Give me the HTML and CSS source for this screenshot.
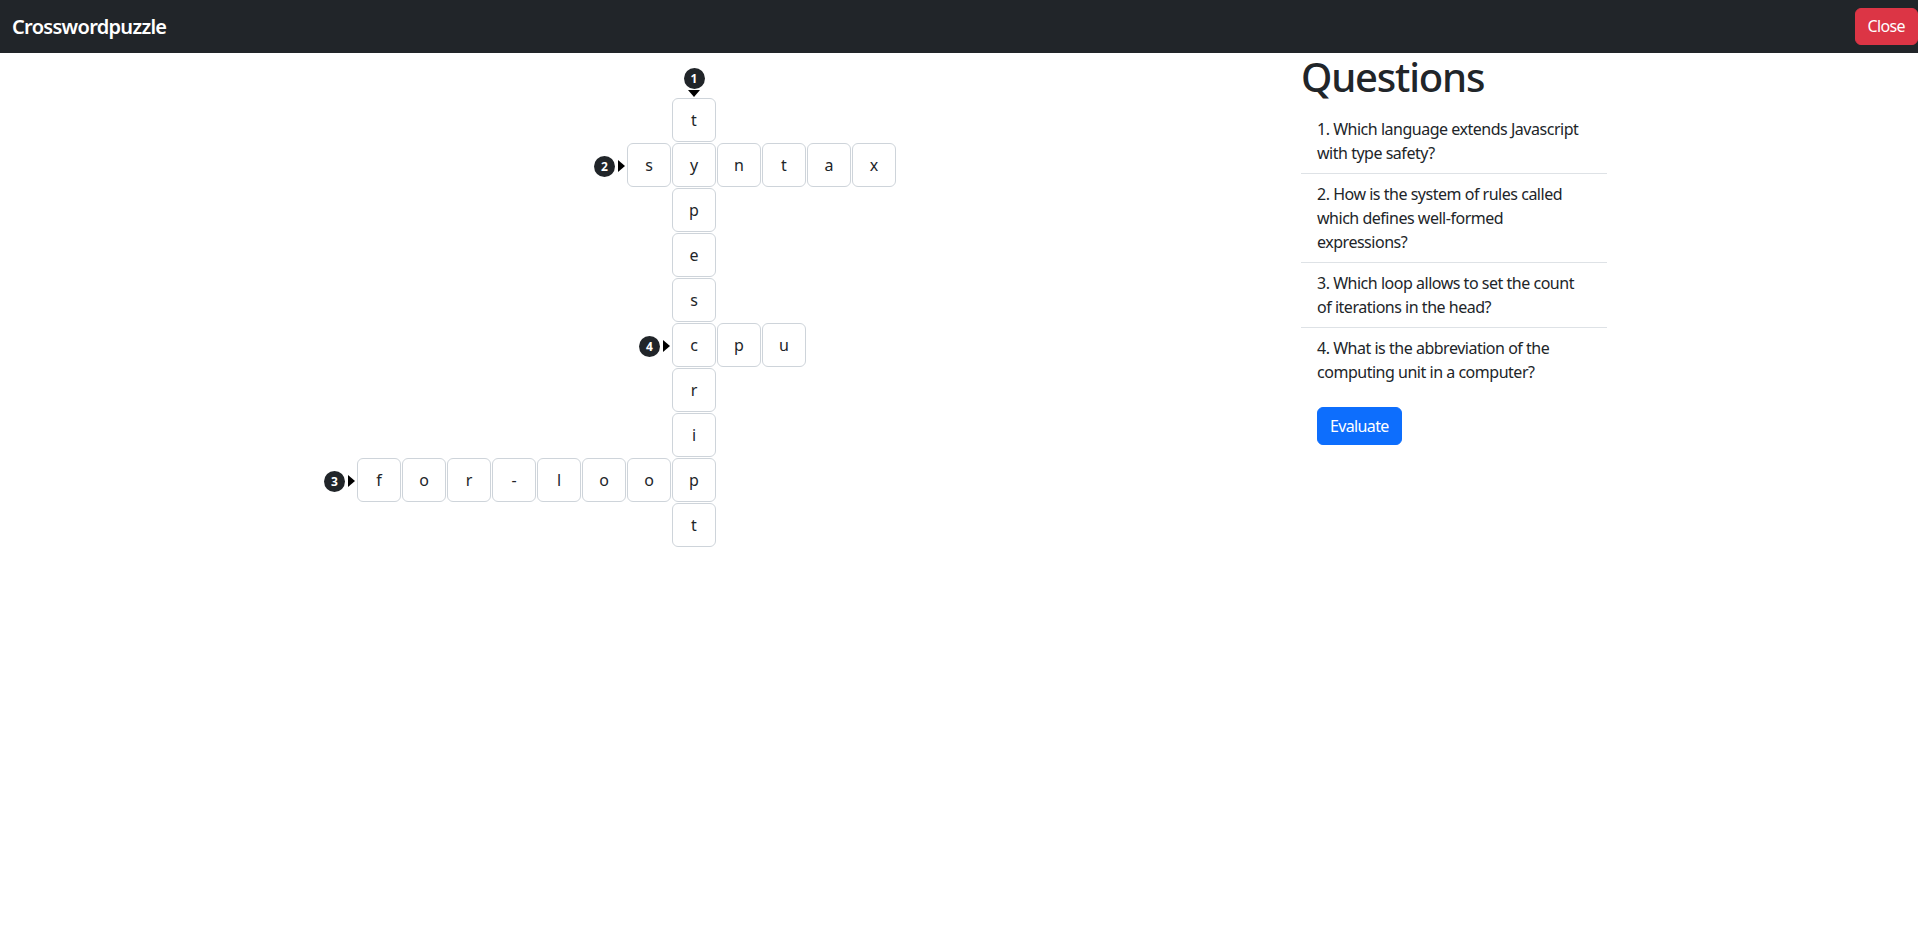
FILE: index.html
```html
<!DOCTYPE html>
<html lang="en">
<head>
<meta charset="utf-8">
<title>Crosswordpuzzle</title>
<link rel="stylesheet" href="styles.css">
</head>
<body>
<nav class="navbar">
  <span class="brand">Crosswordpuzzle</span>
  <button class="btn btn-danger">Close</button>
</nav>
<main class="page">
  <section class="board">
    <div class="grid">
      <div class="clue down" style="grid-column:9;grid-row:1"><span class="num">1</span><span class="tri-down"></span></div>
      <div class="clue across" style="grid-column:7;grid-row:3"><span class="num">2</span><span class="tri-right"></span></div>
      <div class="clue across" style="grid-column:8;grid-row:7"><span class="num">4</span><span class="tri-right"></span></div>
      <div class="clue across" style="grid-column:1;grid-row:10"><span class="num">3</span><span class="tri-right"></span></div>

      <div class="cell" style="grid-column:9;grid-row:2">t</div>
      <div class="cell" style="grid-column:8;grid-row:3">s</div>
      <div class="cell" style="grid-column:9;grid-row:3">y</div>
      <div class="cell" style="grid-column:10;grid-row:3">n</div>
      <div class="cell" style="grid-column:11;grid-row:3">t</div>
      <div class="cell" style="grid-column:12;grid-row:3">a</div>
      <div class="cell" style="grid-column:13;grid-row:3">x</div>
      <div class="cell" style="grid-column:9;grid-row:4">p</div>
      <div class="cell" style="grid-column:9;grid-row:5">e</div>
      <div class="cell" style="grid-column:9;grid-row:6">s</div>
      <div class="cell" style="grid-column:9;grid-row:7">c</div>
      <div class="cell" style="grid-column:10;grid-row:7">p</div>
      <div class="cell" style="grid-column:11;grid-row:7">u</div>
      <div class="cell" style="grid-column:9;grid-row:8">r</div>
      <div class="cell" style="grid-column:9;grid-row:9">i</div>
      <div class="cell" style="grid-column:2;grid-row:10">f</div>
      <div class="cell" style="grid-column:3;grid-row:10">o</div>
      <div class="cell" style="grid-column:4;grid-row:10">r</div>
      <div class="cell" style="grid-column:5;grid-row:10">-</div>
      <div class="cell" style="grid-column:6;grid-row:10">l</div>
      <div class="cell" style="grid-column:7;grid-row:10">o</div>
      <div class="cell" style="grid-column:8;grid-row:10">o</div>
      <div class="cell" style="grid-column:9;grid-row:10">p</div>
      <div class="cell" style="grid-column:9;grid-row:11">t</div>
    </div>
  </section>
  <aside class="questions">
    <h1 class="title">Questions</h1>
    <ol class="list">
      <li class="item">1. Which language extends Javascript with type safety?</li>
      <li class="item">2. How is the system of rules called which defines well-formed expressions?</li>
      <li class="item">3. Which loop allows to set the count of iterations in the head?</li>
      <li class="item">4. What is the abbreviation of the computing unit in a computer?</li>
    </ol>
    <div class="actions">
      <button class="btn btn-primary">Evaluate</button>
    </div>
  </aside>
</main>
</body>
</html>
```
FILE: styles.css
```css
* { box-sizing: border-box; }
html, body { margin: 0; padding: 0; }
body {
  font-family: "Noto Sans", "Open Sans", sans-serif;
  font-size: 16px;
  line-height: 1.5;
  letter-spacing: -0.03em;
  color: #212529;
  background: #fff;
}
.navbar {
  height: 53px;
  background: #212529;
  display: flex;
  align-items: center;
  justify-content: space-between;
  padding-left: 12px;
}
.brand {
  color: #fff;
  font-size: 20px;
  font-weight: 600;
  line-height: 30px;
  letter-spacing: -0.035em;
}
.btn {
  font-family: inherit;
  font-size: 16px;
  line-height: 24px;
  letter-spacing: -0.04em;
  padding: 5px 12px 6px;
  border: 1px solid transparent;
  border-radius: 6px;
  color: #fff;
  cursor: pointer;
}
.btn-danger { background: #dc3545; border-color: #dc3545; }
.btn-primary { background: #0d6efd; border-color: #0d6efd; padding: 6px 12px; }
.page {
  max-width: 1320px;
  margin: 0 auto;
  display: flex;
}
.board { flex: 0 0 75%; padding: 0 12px; }
.questions { flex: 0 0 25%; padding: 0 12px; }
.grid {
  display: grid;
  grid-template-columns: repeat(13, 44px);
  grid-template-rows: repeat(11, 44px);
  gap: 1px;
  margin-left: 1px;
}
.cell {
  border: 1px solid #ced4da;
  border-radius: 6px;
  display: flex;
  align-items: center;
  justify-content: center;
  font-size: 16px;
  letter-spacing: 0;
  color: #212529;
}
.clue { display: flex; }
.clue.down { flex-direction: column; align-items: center; justify-content: flex-end; }
.clue.across { align-items: center; justify-content: flex-end; gap: 3px; padding-right: 1px; padding-top: 2px; }
.num {
  width: 21px;
  height: 21px;
  border-radius: 50%;
  background: #212529;
  color: #fff;
  font-size: 12px;
  font-weight: 700;
  line-height: 21px;
  letter-spacing: 0;
  text-align: center;
}
.tri-down {
  width: 0; height: 0;
  border-left: 6.5px solid transparent;
  border-right: 6.5px solid transparent;
  border-top: 7px solid #000;
  margin-top: 1px;
}
.tri-right {
  width: 0; height: 0;
  border-top: 6px solid transparent;
  border-bottom: 6px solid transparent;
  border-left: 7px solid #000;
}
.title {
  font-size: 40px;
  font-weight: 500;
  line-height: 1.2;
  letter-spacing: -0.03em;
  margin: 0 0 8px;
}
.list { list-style: none; margin: 0; padding: 0; }
.item {
  padding: 8px 16px;
  border-bottom: 1px solid #dee2e6;
}
.item:last-child { border-bottom: 0; }
.actions { padding: 15px 16px 0; }
```
